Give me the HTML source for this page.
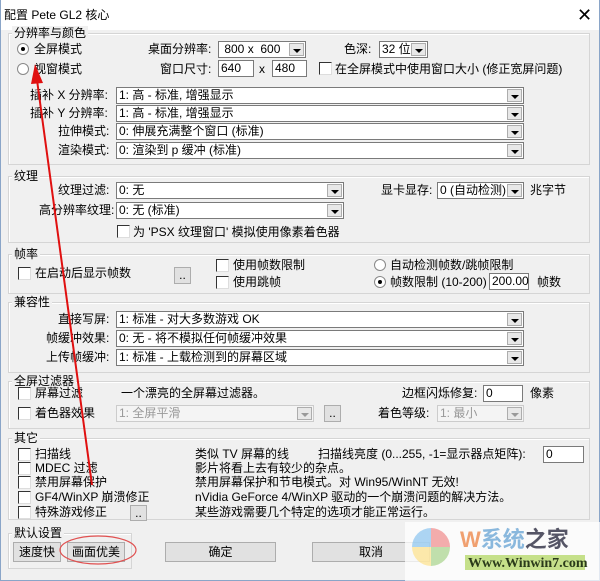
<!DOCTYPE html>
<html><head><meta charset="utf-8"><style>
*{box-sizing:border-box;margin:0;padding:0}
body{width:600px;height:581px;background:#f0f0f0;position:relative;overflow:hidden;font:12px "Liberation Sans","Noto Sans CJK SC",sans-serif;color:#000}
.a{position:absolute;white-space:nowrap;line-height:14px}
.g{position:absolute;border:1px solid #d5d5d5;box-shadow:inset 1px 1px 0 #fff}
.gl{position:absolute;background:#f0f0f0;padding:0 2px;line-height:14px}
.cb{position:absolute;background:#fff;border:1px solid #7a7a7a;line-height:14px;padding-left:2px;overflow:hidden;white-space:nowrap}
.cb i{position:absolute;right:1px;top:1px;bottom:1px;width:15px;background:#e8e8e8;border:1px solid #adadad}
.cb i:after{content:"";position:absolute;left:3px;top:5px;border:4px solid transparent;border-top:4px solid #000;border-bottom:0}
.dis{background:#f4f4f4;border-color:#ccc;color:#999}
.dis i:after{border-top-color:#999}
.ck{position:absolute;width:13px;height:13px;background:#fff;border:1px solid #333;border-right-color:#ddd;border-bottom-color:#ddd}
.rd{position:absolute;width:12px;height:12px;border-radius:50%;background:#fff;border:1px solid #888}
.rd.on:after{content:"";position:absolute;left:3px;top:3px;width:4px;height:4px;border-radius:50%;background:#000}
.ed{position:absolute;background:#fff;border:1px solid #7a7a7a;line-height:14px;padding-left:2px}
.bt{position:absolute;background:#e1e1e1;border:1px solid #adadad;text-align:center;line-height:18px}
</style></head><body>
<div style="position:absolute;left:0;top:0;width:600px;height:30px;background:#fff"></div>
<div class="a" style="left:4px;top:8px">配置 Pete GL2 核心</div>
<div class="a" style="left:577px;top:5px;font-size:18px;line-height:20px">✕</div>
<div style="position:absolute;left:0;top:0;width:600px;height:581px;border:1px solid #8aa5c8;border-top:none"></div>

<div class="g" style="left:8px;top:33px;width:582px;height:132px"></div>
<div class="gl" style="left:12px;top:26px">分辨率与颜色</div>
<div class="rd on" style="left:17px;top:43px"></div><div class="a" style="left:34px;top:42px">全屏模式</div>
<div class="rd" style="left:17px;top:63px"></div><div class="a" style="left:34px;top:62px">视窗模式</div>
<div class="a" style="left:148px;top:42px">桌面分辨率:</div>
<div class="cb" style="left:218px;top:41px;width:88px;height:17px">&nbsp;800 x &nbsp;600<i></i></div>
<div class="a" style="left:344px;top:42px">色深:</div>
<div class="cb" style="left:379px;top:41px;width:49px;height:17px">32 位<i></i></div>
<div class="a" style="left:160px;top:62px">窗口尺寸:</div>
<div class="ed" style="left:218px;top:60px;width:36px;height:17px">640</div>
<div class="a" style="left:259px;top:62px">x</div>
<div class="ed" style="left:272px;top:60px;width:35px;height:17px">480</div>
<div class="ck" style="left:319px;top:62px"></div><div class="a" style="left:335px;top:62px">在全屏模式中使用窗口大小 (修正宽屏问题)</div>
<div class="a" style="left:30px;top:88px">插补 X 分辨率:</div>
<div class="cb" style="left:116px;top:87px;width:408px;height:17px">1: 高 - 标准, 增强显示<i></i></div>
<div class="a" style="left:30px;top:106px">插补 Y 分辨率:</div>
<div class="cb" style="left:116px;top:105px;width:408px;height:17px">1: 高 - 标准, 增强显示<i></i></div>
<div class="a" style="left:58px;top:124px">拉伸模式:</div>
<div class="cb" style="left:116px;top:123px;width:408px;height:17px">0: 伸展充满整个窗口 (标准)<i></i></div>
<div class="a" style="left:58px;top:143px">渲染模式:</div>
<div class="cb" style="left:116px;top:142px;width:408px;height:17px">0: 渲染到 p 缓冲 (标准)<i></i></div>

<div class="g" style="left:8px;top:176px;width:582px;height:67px"></div>
<div class="gl" style="left:12px;top:169px">纹理</div>
<div class="a" style="left:58px;top:183px">纹理过滤:</div>
<div class="cb" style="left:116px;top:182px;width:228px;height:17px">0: 无<i></i></div>
<div class="a" style="left:39px;top:203px">高分辨率纹理:</div>
<div class="cb" style="left:116px;top:202px;width:228px;height:17px">0: 无 (标准)<i></i></div>
<div class="ck" style="left:117px;top:225px"></div><div class="a" style="left:133px;top:225px">为 'PSX 纹理窗口' 模拟使用像素着色器</div>
<div class="a" style="left:381px;top:183px">显卡显存:</div>
<div class="cb" style="left:437px;top:182px;width:87px;height:17px">0 (自动检测)<i></i></div>
<div class="a" style="left:530px;top:183px">兆字节</div>

<div class="g" style="left:8px;top:254px;width:582px;height:40px"></div>
<div class="gl" style="left:12px;top:247px">帧率</div>
<div class="ck" style="left:18px;top:267px"></div><div class="a" style="left:35px;top:266px">在启动后显示帧数</div>
<div class="bt" style="left:174px;top:267px;width:17px;height:17px;line-height:14px">..</div>
<div class="ck" style="left:216px;top:259px"></div><div class="a" style="left:233px;top:258px">使用帧数限制</div>
<div class="ck" style="left:216px;top:276px"></div><div class="a" style="left:233px;top:275px">使用跳帧</div>
<div class="rd" style="left:374px;top:259px"></div><div class="a" style="left:390px;top:258px">自动检测帧数/跳帧限制</div>
<div class="rd on" style="left:374px;top:276px"></div><div class="a" style="left:390px;top:275px">帧数限制 (10-200)</div>
<div class="ed" style="left:489px;top:273px;width:40px;height:17px">200.00</div>
<div class="a" style="left:537px;top:275px">帧数</div>

<div class="g" style="left:8px;top:302px;width:582px;height:71px"></div>
<div class="gl" style="left:12px;top:295px">兼容性</div>
<div class="a" style="left:58px;top:312px">直接写屏:</div>
<div class="cb" style="left:116px;top:311px;width:408px;height:17px">1: 标准 - 对大多数游戏 OK<i></i></div>
<div class="a" style="left:46px;top:331px">帧缓冲效果:</div>
<div class="cb" style="left:116px;top:330px;width:408px;height:17px">0: 无 - 将不模拟任何帧缓冲效果<i></i></div>
<div class="a" style="left:46px;top:350px">上传帧缓冲:</div>
<div class="cb" style="left:116px;top:349px;width:408px;height:17px">1: 标准 - 上载检测到的屏幕区域<i></i></div>

<div class="g" style="left:8px;top:381px;width:582px;height:48px"></div>
<div class="gl" style="left:12px;top:374px">全屏过滤器</div>
<div class="ck" style="left:18px;top:387px"></div><div class="a" style="left:35px;top:386px">屏幕过滤</div>
<div class="a" style="left:121px;top:386px">一个漂亮的全屏幕过滤器。</div>
<div class="a" style="left:402px;top:386px">边框闪烁修复:</div>
<div class="ed" style="left:483px;top:385px;width:40px;height:17px">0</div>
<div class="a" style="left:530px;top:386px">像素</div>
<div class="ck" style="left:18px;top:407px"></div><div class="a" style="left:35px;top:406px">着色器效果</div>
<div class="cb dis" style="left:116px;top:405px;width:198px;height:17px">1: 全屏平滑<i></i></div>
<div class="bt" style="left:324px;top:405px;width:17px;height:17px;line-height:14px">..</div>
<div class="a" style="left:378px;top:406px">着色等级:</div>
<div class="cb dis" style="left:437px;top:405px;width:87px;height:17px">1: 最小<i></i></div>

<div class="g" style="left:8px;top:438px;width:582px;height:82px"></div>
<div class="gl" style="left:12px;top:431px">其它</div>
<div class="ck" style="left:18px;top:448px"></div><div class="a" style="left:35px;top:447px">扫描线</div>
<div class="ck" style="left:18px;top:462px"></div><div class="a" style="left:35px;top:461px">MDEC 过滤</div>
<div class="ck" style="left:18px;top:476px"></div><div class="a" style="left:35px;top:475px">禁用屏幕保护</div>
<div class="ck" style="left:18px;top:491px"></div><div class="a" style="left:35px;top:490px">GF4/WinXP 崩溃修正</div>
<div class="ck" style="left:18px;top:506px"></div><div class="a" style="left:35px;top:505px">特殊游戏修正</div>
<div class="bt" style="left:130px;top:505px;width:17px;height:16px;line-height:14px">..</div>
<div class="a" style="left:195px;top:447px">类似 TV 屏幕的线</div>
<div class="a" style="left:318px;top:447px">扫描线亮度 (0...255, -1=显示器点矩阵):</div>
<div class="ed" style="left:543px;top:446px;width:41px;height:17px">0</div>
<div class="a" style="left:195px;top:461px">影片将看上去有较少的杂点。</div>
<div class="a" style="left:195px;top:475px">禁用屏幕保护和节电模式。对 Win95/WinNT 无效!</div>
<div class="a" style="left:195px;top:490px">nVidia GeForce 4/WinXP 驱动的一个崩溃问题的解决方法。</div>
<div class="a" style="left:195px;top:505px">某些游戏需要几个特定的选项才能正常运行。</div>

<div class="g" style="left:8px;top:533px;width:124px;height:36px"></div>
<div class="gl" style="left:12px;top:526px">默认设置</div>
<div class="bt" style="left:13px;top:542px;width:48px;height:20px">速度快</div>
<div class="bt" style="left:67px;top:542px;width:58px;height:20px">画面优美</div>
<div class="bt" style="left:165px;top:542px;width:111px;height:20px">确定</div>
<div class="bt" style="left:312px;top:542px;width:118px;height:20px">取消</div>

<div style="position:absolute;left:405px;top:522px;width:195px;height:59px;background:rgba(255,255,255,.75)"></div>
<div style="position:absolute;left:412px;top:528px;width:38px;height:38px;border-radius:50%;opacity:.6;background:conic-gradient(#e77 0 25%,#9c7 0 50%,#fd7 0 75%,#7be 0)"></div>
<div class="a" style="left:460px;top:527px;font-size:22px;line-height:26px;font-weight:bold;color:#f0a070">W<span style="color:#8ab8dd">系统</span><span style="color:#556">之家</span></div>
<div style="position:absolute;left:465px;top:555px;width:120px;height:15px;background:#c5e08a"></div>
<div class="a" style="left:468px;top:556px;font:bold 14px 'Liberation Serif',serif;color:#2a3a1a">Www.Winwin7.com</div>

<svg style="position:absolute;left:0;top:0" width="600" height="581">
<line x1="92" y1="485" x2="37" y2="80" stroke="#e01010" stroke-width="2"/>
<polygon points="35,64 31,84 43,83" fill="#e01010"/>
<ellipse cx="98" cy="550" rx="38" ry="14" fill="none" stroke="#e05050" stroke-width="1.2"/>
</svg>
</body></html>
